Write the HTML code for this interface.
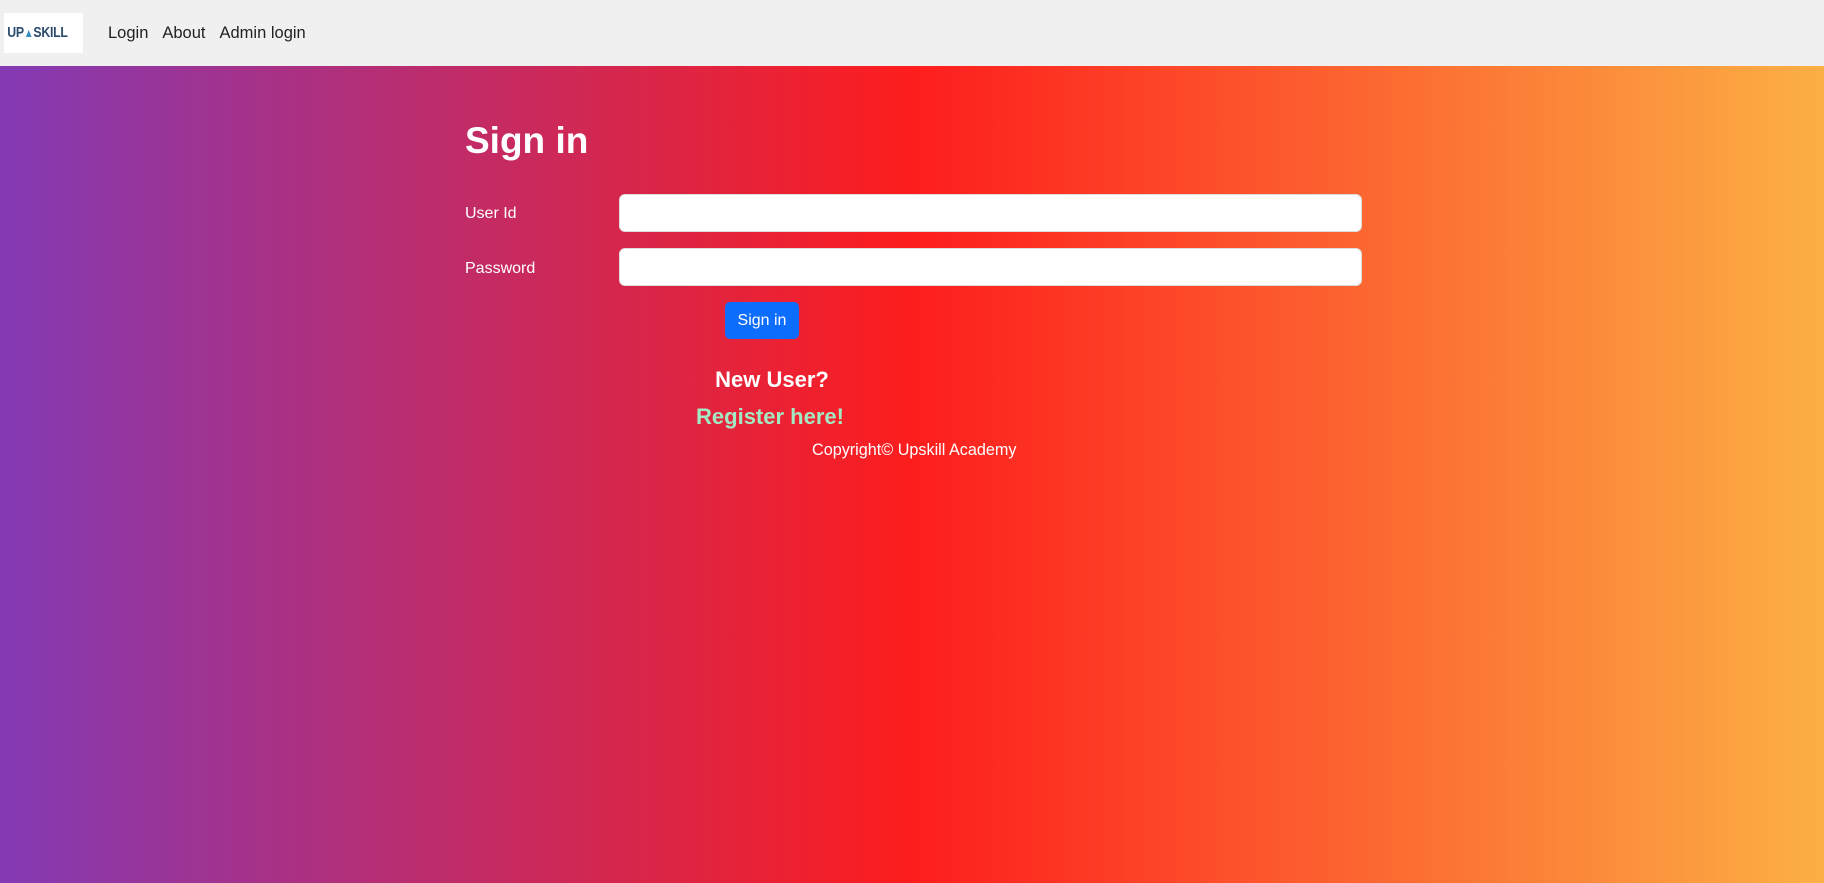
<!DOCTYPE html>
<html><head><meta charset="utf-8"><style>
*{box-sizing:border-box;margin:0;padding:0}
html,body{width:1824px;height:883px;overflow:hidden;font-family:"Liberation Sans",sans-serif}
body{background:linear-gradient(90deg,#833ab4 0%,#fd1d1d 50%,#fcb045 100%)}
.nav{position:absolute;left:0;top:0;width:1824px;height:66px;background:#f0f0f0}
.logo{position:absolute;left:4px;top:13px;width:79px;height:40px;background:#fff}
.logo div{font-weight:bold;font-size:15px;color:#2a4a6e;line-height:40px;padding-left:4px;letter-spacing:-0.3px;transform:scaleX(0.82);transform-origin:left;white-space:nowrap}
.logo span{color:#3a8fc0;font-size:12px}
.links{position:absolute;left:108px;top:24px;font-size:16.5px;color:#222}
.links a{margin-right:14px}
.abs{position:absolute;color:#fff}
input{position:absolute;left:619px;width:743px;height:38px;background:#fff;border:1px solid #ddd;border-radius:6px}
</style></head><body>
<div class="nav"><div class="logo"><div>UP<span>&#9650;</span>SKILL</div></div>
<div class="links"><a>Login</a><a>About</a><a>Admin login</a></div></div>
<div class="abs" style="left:465px;top:120px;font-size:37px;font-weight:bold">Sign in</div>
<div class="abs" style="left:465px;top:205px;font-size:16px">User Id</div>
<input style="top:194px">
<div class="abs" style="left:465px;top:260px;font-size:16px">Password</div>
<input style="top:248px">
<div class="abs" style="left:725px;top:302px;width:74px;height:37px;background:#0d6efd;border-radius:5px;font-size:16px;line-height:37px;text-align:center">Sign in</div>
<div class="abs" style="left:672px;top:367px;width:200px;text-align:center;font-size:22px;font-weight:bold">New User?</div>
<div class="abs" style="left:670px;top:404px;width:200px;text-align:center;font-size:22px;font-weight:bold;color:#a3e8c2">Register here!</div>
<div class="abs" style="left:812px;top:441px;width:220px;font-size:16.2px;white-space:nowrap">Copyright© Upskill Academy</div>
</body></html>
